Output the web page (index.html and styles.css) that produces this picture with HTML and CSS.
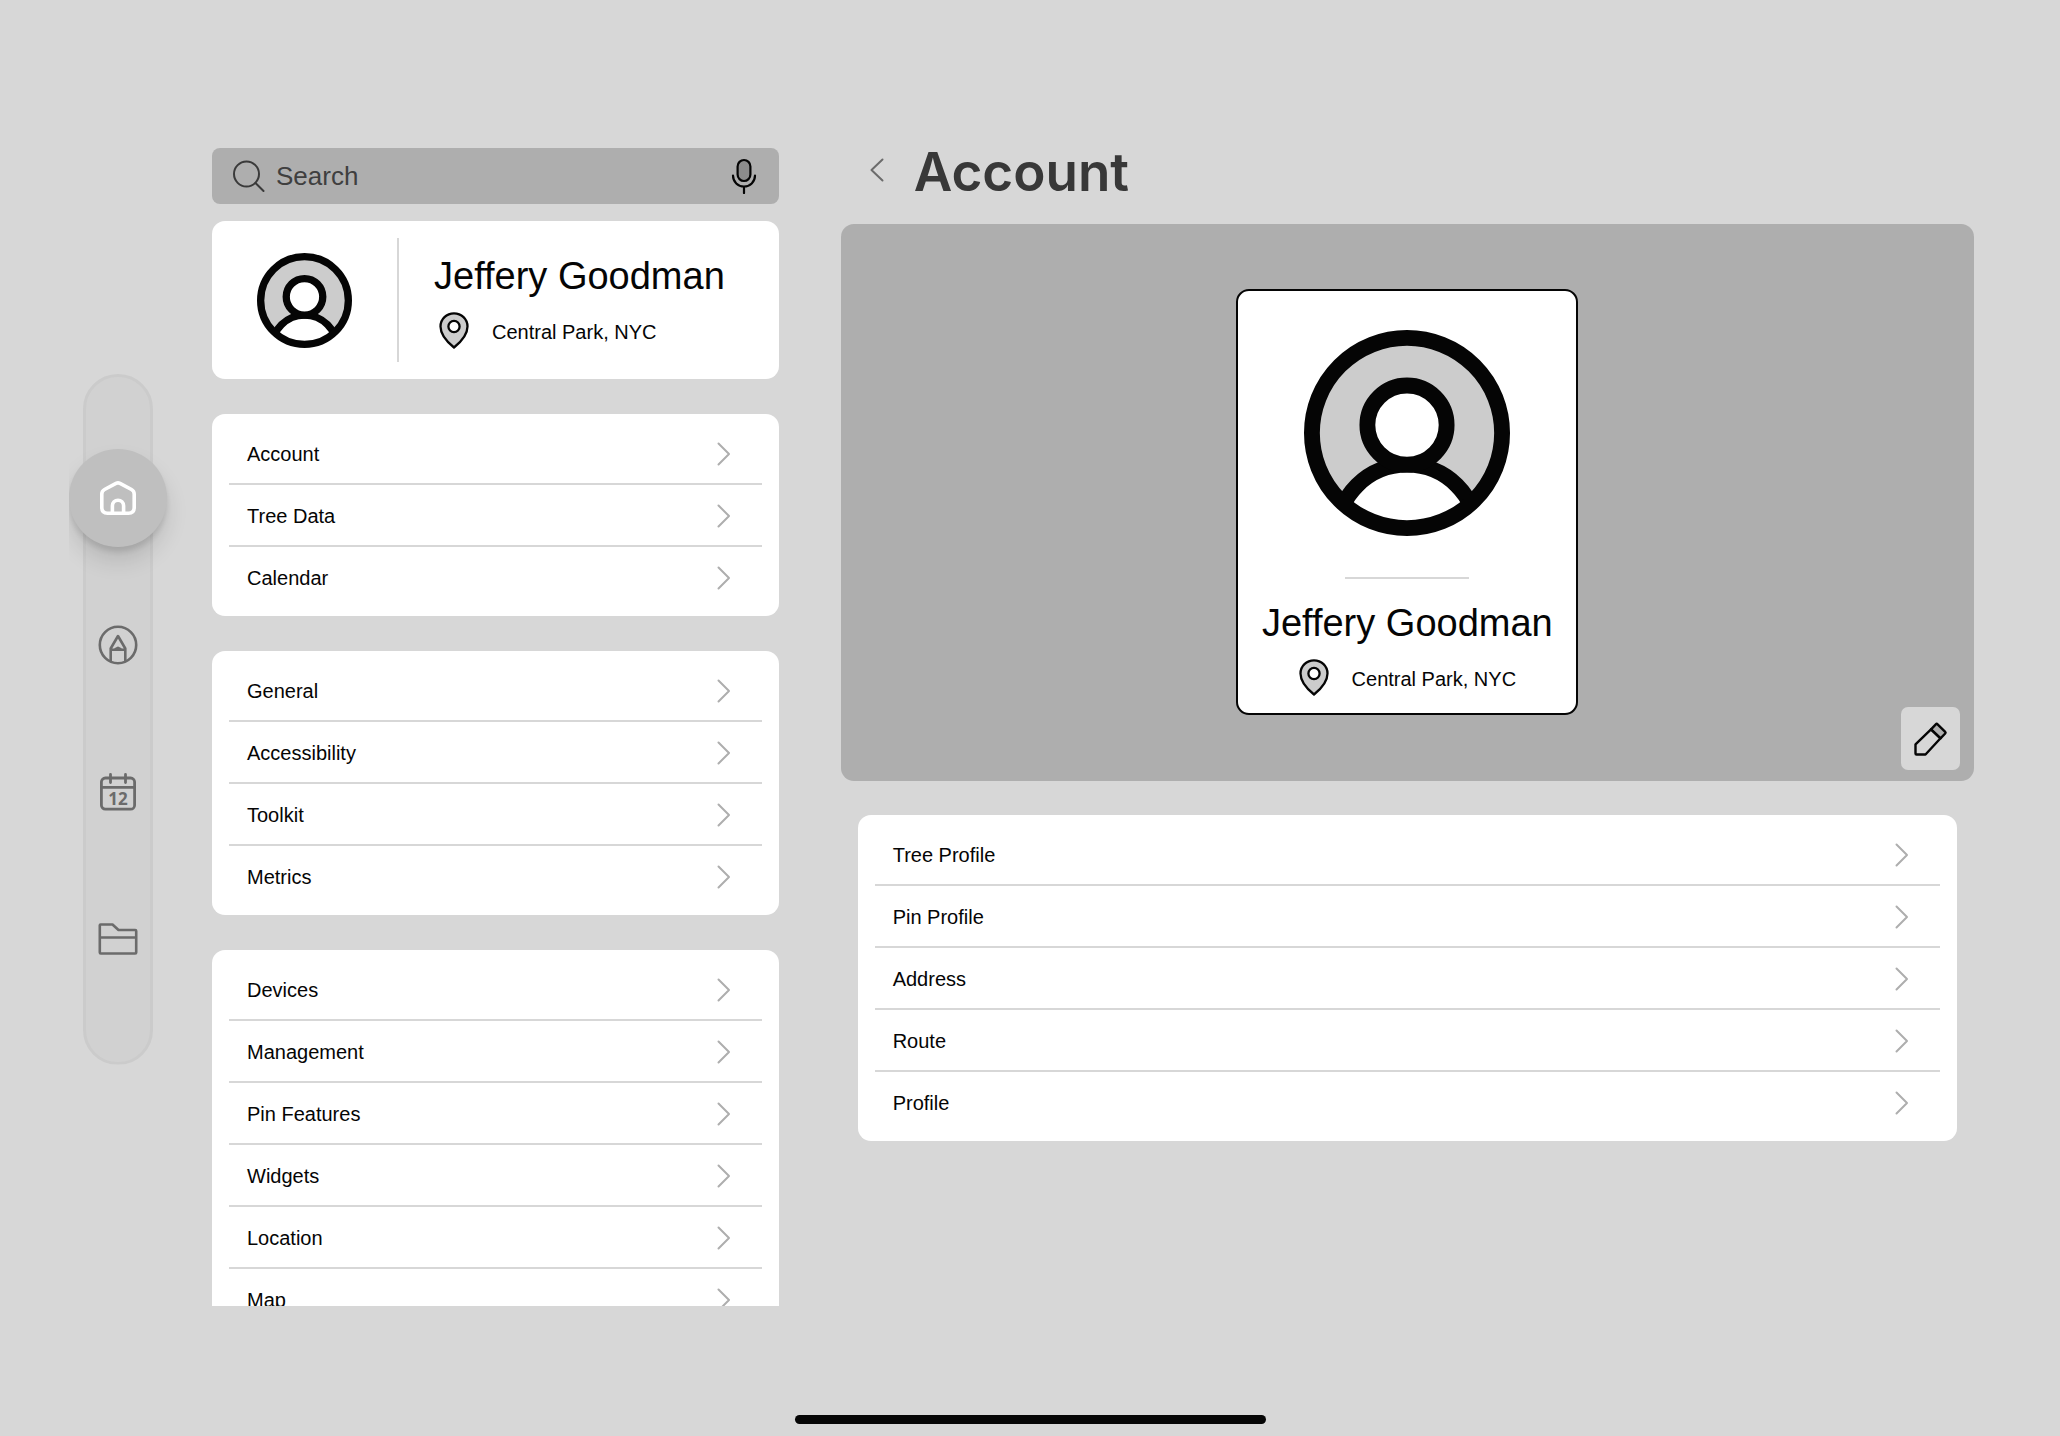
FILE: index.html
```html
<!DOCTYPE html>
<html lang="en">
<head>
<meta charset="utf-8">
<meta name="viewport" content="width=device-width, initial-scale=1">
<title>Account</title>
<link rel="stylesheet" href="styles.css">
</head>
<body>
<svg class="sprite" aria-hidden="true">
  <symbol id="chevron" viewBox="0 0 16 24"><path d="M3.500 1.500 14 12 3.500 22.500" fill="none" stroke="currentColor" stroke-width="2" stroke-linecap="round" stroke-linejoin="round"/></symbol>
  <symbol id="avatar" viewBox="0 0 26 26">
    <clipPath id="avatar-clip"><circle cx="13" cy="13" r="12.5"/></clipPath>
    <circle cx="13" cy="13" r="12" fill="#ccc"/>
    <g clip-path="url(#avatar-clip)" fill="#fff" stroke="#050505" stroke-width="2">
      <circle cx="13" cy="25.900" r="8.900"/>
      <circle cx="13" cy="12" r="5"/>
    </g>
    <circle cx="13" cy="13" r="12" fill="none" stroke="#050505" stroke-width="2"/>
  </symbol>
  <symbol id="pin" viewBox="0 0 30 37">
    <path d="M15 35.5C10 31.500 1.500 24 1.500 14.500A13.500 13.200 0 0 1 28.500 14.500C28.500 24 20 31.500 15 35.500Z" fill="#ccc" stroke="#050505" stroke-width="2.300" stroke-linejoin="round"/>
    <circle cx="15" cy="14.500" r="5.600" fill="#fff" stroke="#050505" stroke-width="2.300"/>
  </symbol>
</svg>

<div class="shell">
  <nav class="rail" aria-label="Main">
    <div class="rail-track">
      <a class="rail-item rail-item-active" href="#home" aria-label="Home">
        <svg class="rail-icon" viewBox="0 0 40 40" fill="none" stroke="currentColor" stroke-width="3.600" stroke-linejoin="round"><path d="M18 5.400 6.500 11.500Q3.800 13 3.800 16V29.500Q3.800 35.200 9.500 35.200H30.500Q36.200 35.200 36.200 29.500V16Q36.200 13 33.500 11.500L22 5.400Q20 4.400 18 5.400ZM14.400 35V27.800A5.600 5.600 0 0 1 25.600 27.800V35"/></svg>
      </a>
      <a class="rail-item" href="#draw" aria-label="Draw">
        <svg class="rail-icon" viewBox="0 0 40 40" fill="none" stroke="currentColor" stroke-width="2.600" stroke-linejoin="round"><circle cx="20" cy="20" r="18.200"/><path d="M12.700 36V23.500L20 11 27.300 23.500V36M12.700 24.800H27.300M17 24.500 20 22.800 23 24.500"/></svg>
      </a>
      <a class="rail-item" href="#calendar" aria-label="Calendar">
        <svg class="rail-icon" viewBox="0 0 40 40" fill="none" stroke="currentColor" stroke-width="2.800" stroke-linecap="round"><rect x="3.400" y="6" width="33.200" height="31.200" rx="4"/><path d="M3.400 15.300H36.600M12.500 2.500V10.500M27.500 2.500V10.500"/><text class="rail-date" x="20" y="33" text-anchor="middle">12</text></svg>
      </a>
      <a class="rail-item" href="#files" aria-label="Files">
        <svg class="rail-icon" viewBox="0 0 40 40" fill="none" stroke="currentColor" stroke-width="2.600" stroke-linejoin="round"><path d="M1.800 6.300Q1.800 5.500 2.600 5.500H14.500L20.500 11H37.200Q38.200 11 38.200 12V33.500Q38.200 34.500 37.200 34.500H2.800Q1.800 34.500 1.800 33.500ZM1.800 18.500H38.200"/></svg>
      </a>
    </div>
  </nav>

  <div class="columns">
    <aside class="side">
      <form class="search" role="search">
        <svg class="search-icon" viewBox="0 0 32 32" fill="none" stroke="currentColor" stroke-width="2" stroke-linecap="round"><circle cx="13.500" cy="14" r="12.500"/><path d="M22.500 23 30.500 31"/></svg>
        <input class="search-input" type="search" placeholder="Search" aria-label="Search">
        <button class="icon-button" type="button" aria-label="Voice search">
          <svg class="mic-icon" viewBox="0 0 26 36" fill="none" stroke="#050505" stroke-width="2.200" stroke-linecap="round"><rect x="6.600" y="2" width="12.800" height="21" rx="6.400" fill="#8c8c8c"/><path d="M2 17.500C2 24 7 28.500 13 28.500S24 24 24 17.500M13 28.500V35"/></svg>
        </button>
      </form>

      <div class="side-scroll">
        <section class="card profile">
          <div class="profile-picture"><svg class="avatar-small"><use href="#avatar"/></svg></div>
          <div class="profile-text">
            <h2 class="name">Jeffery Goodman</h2>
            <p class="place"><svg class="pin"><use href="#pin"/></svg><span>Central Park, NYC</span></p>
          </div>
        </section>

        <ul class="card menu">
          <li><a class="row" href="#account">Account<svg class="chevron"><use href="#chevron"/></svg></a></li>
          <li><a class="row" href="#tree-data">Tree Data<svg class="chevron"><use href="#chevron"/></svg></a></li>
          <li><a class="row" href="#calendar">Calendar<svg class="chevron"><use href="#chevron"/></svg></a></li>
        </ul>

        <ul class="card menu">
          <li><a class="row" href="#general">General<svg class="chevron"><use href="#chevron"/></svg></a></li>
          <li><a class="row" href="#accessibility">Accessibility<svg class="chevron"><use href="#chevron"/></svg></a></li>
          <li><a class="row" href="#toolkit">Toolkit<svg class="chevron"><use href="#chevron"/></svg></a></li>
          <li><a class="row" href="#metrics">Metrics<svg class="chevron"><use href="#chevron"/></svg></a></li>
        </ul>

        <ul class="card menu">
          <li><a class="row" href="#devices">Devices<svg class="chevron"><use href="#chevron"/></svg></a></li>
          <li><a class="row" href="#management">Management<svg class="chevron"><use href="#chevron"/></svg></a></li>
          <li><a class="row" href="#pin-features">Pin Features<svg class="chevron"><use href="#chevron"/></svg></a></li>
          <li><a class="row" href="#widgets">Widgets<svg class="chevron"><use href="#chevron"/></svg></a></li>
          <li><a class="row" href="#location">Location<svg class="chevron"><use href="#chevron"/></svg></a></li>
          <li><a class="row" href="#map">Map<svg class="chevron"><use href="#chevron"/></svg></a></li>
        </ul>
      </div>
    </aside>

    <main class="main">
      <header class="main-header">
        <button class="icon-button back" type="button" aria-label="Back">
          <svg class="back-icon" viewBox="0 0 16 24"><path d="M13.500 1.500 2.500 12 13.500 22.500" fill="none" stroke="currentColor" stroke-width="2" stroke-linecap="round" stroke-linejoin="round"/></svg>
        </button>
        <h1 class="title">Account</h1>
      </header>

      <section class="banner">
        <div class="id-card">
          <svg class="avatar-large"><use href="#avatar"/></svg>
          <hr class="id-rule">
          <h2 class="name">Jeffery Goodman</h2>
          <p class="place"><svg class="pin"><use href="#pin"/></svg><span>Central Park, NYC</span></p>
        </div>
        <button class="edit" type="button" aria-label="Edit profile">
          <svg class="edit-icon" viewBox="0 0 36 36" stroke="#050505" stroke-width="2.400" stroke-linejoin="round" fill="none"><path d="M18 8.300 22.800 3.300Q23.700 2.400 24.600 3.300L32.200 10.900Q33 11.700 32.200 12.500L27.500 17.300Z" fill="#aeaeae"/><path d="M18 8.300 2.500 23.300V32.500Q2.500 33.500 3.500 33.500H12.500L27.500 17.300Z"/></svg>
        </button>
      </section>

      <ul class="card menu menu-detail">
        <li><a class="row" href="#tree-profile">Tree Profile<svg class="chevron"><use href="#chevron"/></svg></a></li>
        <li><a class="row" href="#pin-profile">Pin Profile<svg class="chevron"><use href="#chevron"/></svg></a></li>
        <li><a class="row" href="#address">Address<svg class="chevron"><use href="#chevron"/></svg></a></li>
        <li><a class="row" href="#route">Route<svg class="chevron"><use href="#chevron"/></svg></a></li>
        <li><a class="row" href="#profile">Profile<svg class="chevron"><use href="#chevron"/></svg></a></li>
      </ul>
    </main>
  </div>
</div>
<div class="home-indicator"></div>
</body>
</html>
```
FILE: styles.css
```css
* {
  box-sizing: border-box;
}

body {
  margin: 0;
  height: 100vh;
  display: flex;
  flex-direction: column;
  background: #d7d7d7;
  color: #050505;
  font-family: "Liberation Sans", Arial, sans-serif;
}

h1, h2, p, ul {
  margin: 0;
  padding: 0;
}

ul {
  list-style: none;
}

svg {
  display: block;
  flex: none;
}

.sprite {
  position: absolute;
  width: 0;
  height: 0;
}

.shell {
  flex: 1;
  min-height: 0;
  display: flex;
  gap: 45px;
  padding: 148px 86px 109px 69px;
}

.columns {
  flex: 1;
  min-width: 0;
  display: grid;
  grid-template-columns: minmax(0, 1fr) minmax(0, 2fr);
  grid-template-rows: minmax(0, 1fr);
  gap: 62px;
}

/* Navigation rail */
.rail {
  flex: none;
  width: 98px;
  align-self: center;
  margin-bottom: 16px;
  clip-path: inset(0 -24px 0 0);
}

.rail-track {
  width: 70px;
  margin: 0 auto;
  padding: 72px 0 74px;
  display: flex;
  flex-direction: column;
  align-items: center;
  gap: 49px;
  background: #d1d1d1;
  border: 3px solid #cbcbcb;
  border-radius: 35px;
}

.rail-item {
  flex: none;
  width: 98px;
  height: 98px;
  display: flex;
  align-items: center;
  justify-content: center;
  color: #6b6b6b;
  border-radius: 50%;
}

.rail-item-active {
  background: #bfbfbf;
  color: #fff;
  box-shadow: 0 5px 5px rgba(0, 0, 0, 0.1), 0 14px 22px rgba(0, 0, 0, 0.12);
}

.rail-icon {
  width: 40px;
  height: 40px;
}

.rail-date {
  fill: currentColor;
  stroke: none;
  font: 700 17px "Noto Sans", sans-serif;
}

/* Settings column */
.side {
  display: flex;
  flex-direction: column;
  gap: 17px;
  min-height: 0;
}

.search {
  flex: none;
  height: 56px;
  padding: 0 22px 0 21px;
  display: flex;
  align-items: center;
  gap: 11px;
  background: #aeaeae;
  border-radius: 8px;
  color: #3a3a3a;
}

.search-icon {
  width: 32px;
  height: 32px;
}

.search-input {
  flex: 1;
  min-width: 0;
  padding: 0;
  border: 0;
  outline: 0;
  background: none;
  color: inherit;
  font: 26px/32px "Liberation Sans", Arial, sans-serif;
}

.search-input::placeholder {
  color: #3f3f3f;
  opacity: 1;
}

.icon-button {
  padding: 0;
  border: 0;
  background: none;
  color: inherit;
  cursor: pointer;
}

.mic-icon {
  width: 26px;
  height: 36px;
}

.side-scroll {
  flex: 1;
  min-height: 0;
  display: flex;
  flex-direction: column;
  gap: 35px;
  overflow-y: auto;
  scrollbar-width: none;
}

.card {
  flex: none;
  background: #fff;
  border-radius: 13px;
}

.profile {
  display: flex;
  padding: 17px 0;
}

.profile-picture {
  width: 187px;
  padding-left: 45px;
  display: flex;
  align-items: center;
  border-right: 2px solid #d7d7d7;
}

.avatar-small {
  width: 95px;
  height: 95px;
}

.profile-text {
  padding: 16px 0 10px 35px;
}

.name {
  font-size: 38px;
  line-height: 44px;
  font-weight: 400;
  white-space: nowrap;
}

.place {
  margin-top: 14px;
  display: flex;
  align-items: flex-start;
  gap: 23px;
  font-size: 20px;
  line-height: 40px;
}

.pin {
  width: 30px;
  height: 37px;
}

.profile .place {
  padding-left: 5px;
}

.menu {
  padding: 9px 17px 7px;
}

.row {
  height: 62px;
  padding: 2px 31px 0 18px;
  display: flex;
  align-items: center;
  justify-content: space-between;
  border-bottom: 2px solid #d7d7d7;
  color: inherit;
  font-size: 20px;
  line-height: 24px;
  text-decoration: none;
}

.menu li:last-child .row {
  border-bottom-color: transparent;
}

.chevron {
  width: 16px;
  height: 24px;
  color: #aeaeae;
}

/* Account panel */
.main {
  min-width: 0;
}

.main-header {
  display: flex;
  margin-bottom: 26px;
  padding-left: 28px;
  color: #383838;
}

.back {
  width: 45px;
  height: 44px;
  color: #6b6b6b;
}

.back-icon {
  width: 16px;
  height: 24px;
}

.title {
  font-family: Inter, "Liberation Sans", sans-serif;
  font-size: 53px;
  line-height: 48px;
  font-weight: 600;
}

.banner {
  position: relative;
  display: flex;
  justify-content: center;
  margin-top: 28px;
  padding: 65px 0 66px;
  background: #aeaeae;
  border-radius: 13px;
}

.id-card {
  width: 342px;
  padding: 39px 0 14px;
  display: flex;
  flex-direction: column;
  align-items: center;
  background: #fff;
  border: 2px solid #050505;
  border-radius: 13px;
}

.avatar-large {
  width: 206px;
  height: 206px;
}

.id-rule {
  width: 124px;
  margin: 41px 0 22px;
  border: 0;
  border-top: 2px solid #d7d7d7;
}

.edit {
  position: absolute;
  right: 14px;
  bottom: 11px;
  width: 59px;
  height: 63px;
  padding: 0;
  display: flex;
  align-items: center;
  justify-content: center;
  background: #d7d7d7;
  border: 0;
  border-radius: 7px;
  cursor: pointer;
}

.edit-icon {
  width: 36px;
  height: 36px;
}

.menu-detail {
  margin: 34px 17px 0;
}

.home-indicator {
  flex: none;
  width: 471px;
  height: 9px;
  margin: 0 auto 12px;
  background: #050505;
  border-radius: 5px;
}
```
